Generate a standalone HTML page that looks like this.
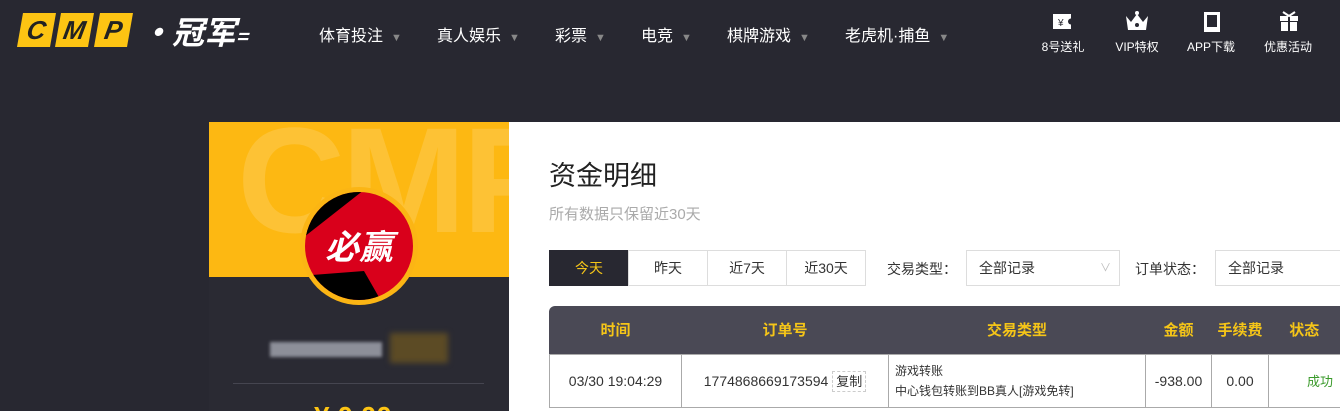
<!DOCTYPE html>
<html><head><meta charset="utf-8"><style>
*{margin:0;padding:0;box-sizing:border-box}
html,body{width:1340px;height:411px;overflow:hidden}
body{background:#282831;font-family:"Liberation Sans","Noto Sans CJK SC",sans-serif;position:relative}
.a{position:absolute}
.nav{color:#fff;font-size:16px;top:22px}
.nav i{font-style:normal;color:#888;font-size:11px;margin-left:8px}
.ic{color:#fff;font-size:12px;top:38px;text-align:center;width:70px}
.cmp{top:13px;width:33px;height:34px;background:#fdc413;color:#222;font:italic bold 26px "Liberation Sans",sans-serif;text-align:center;line-height:34px;transform:skewX(-10deg)}
.btn{top:250px;height:36px;border:1px solid #ddd;font-size:14px;color:#333;text-align:center;line-height:34px}
th{background:#4a4955;color:#f5c518;font-size:15px;height:48px;font-weight:bold}
td{border:1px solid #aaa;font-size:13px;color:#333;height:53px;text-align:center}
</style></head><body>
<div class="a cmp" style="left:20px">C</div><div class="a cmp" style="left:58px">M</div><div class="a cmp" style="left:97px">P</div>
<div class="a" style="left:140px;top:9px;color:#fff;font:italic bold 32px 'Noto Sans CJK SC',sans-serif;line-height:44px">·冠军<span style="font-size:20px">=</span></div>
<div class="a nav" style="left:319px">体育投注<i>▼</i></div>
<div class="a nav" style="left:437px">真人娱乐<i>▼</i></div>
<div class="a nav" style="left:555px">彩票<i>▼</i></div>
<div class="a nav" style="left:641px">电竞<i>▼</i></div>
<div class="a nav" style="left:727px">棋牌游戏<i>▼</i></div>
<div class="a nav" style="left:845px">老虎机·捕鱼<i>▼</i></div>
<svg class="a" style="left:1052px;top:12px" width="20" height="20"><rect x="1" y="2" width="18" height="15" fill="#fff"/><circle cx="19" cy="9.5" r="3" fill="#282831"/><text x="6" y="14" font-size="10" fill="#282831">¥</text></svg>
<svg class="a" style="left:1124px;top:10px" width="26" height="22"><path d="M2 6 L7 12 L13 4 L19 12 L24 6 L22 20 L4 20Z" fill="#fff"/><circle cx="13" cy="3" r="2" fill="#fff"/><circle cx="13" cy="15" r="2" fill="#282831"/></svg>
<svg class="a" style="left:1203px;top:11px" width="18" height="22"><rect x="1" y="1" width="16" height="20" fill="#fff"/><rect x="4" y="4" width="10" height="12" fill="#282831"/></svg>
<svg class="a" style="left:1278px;top:10px" width="22" height="22"><rect x="2" y="6" width="18" height="5" fill="#fff"/><rect x="3" y="12" width="16" height="9" fill="#fff"/><rect x="10" y="6" width="2" height="15" fill="#282831"/><path d="M5 2 L11 6 L17 2" stroke="#fff" stroke-width="2" fill="none"/></svg>
<div class="a ic" style="left:1028px">8号送礼</div>
<div class="a ic" style="left:1102px">VIP特权</div>
<div class="a ic" style="left:1176px">APP下载</div>
<div class="a ic" style="left:1253px">优惠活动</div>

<div class="a" style="left:209px;top:122px;width:300px;height:289px;background:#2a2a33"></div>
<svg class="a" style="left:209px;top:122px" width="300" height="155"><rect width="300" height="155" fill="#fdb812"/><text x="28" y="110" font-size="150" font-weight="bold" fill="#fdc235" letter-spacing="-4" font-family="Liberation Sans">CMP</text></svg>
<svg class="a" style="left:299px;top:186px" width="120" height="120"><defs><clipPath id="c"><circle cx="60" cy="60" r="54"/></clipPath></defs><circle cx="60" cy="60" r="59" fill="#fbb514"/><g clip-path="url(#c)"><rect width="120" height="120" fill="#d9001b"/><path d="M0 0 H70 L0 55Z" fill="#000"/><path d="M0 90 L65 85 L85 120 H0Z" fill="#000"/></g><text x="60" y="73" text-anchor="middle" font-size="34" font-weight="bold" font-style="italic" fill="#fff" font-family="Noto Sans CJK SC">必赢</text></svg>
<div class="a" style="left:270px;top:342px;width:112px;height:15px;background:#8d8f99;filter:blur(1.5px)"></div>
<div class="a" style="left:390px;top:333px;width:58px;height:30px;background:#5c4b25;filter:blur(3px)"></div>
<div class="a" style="left:233px;top:383px;width:251px;height:1px;background:#454550"></div>
<svg class="a" style="left:300px;top:401px" width="120" height="10"><text x="14" y="25" font-size="28" font-weight="bold" fill="#fdc413" font-family="Liberation Sans">¥ 0.00</text></svg>

<div class="a" style="left:509px;top:122px;width:831px;height:289px;background:#fff;overflow:hidden">
<div class="a" style="left:40px;top:32px;font-size:27px;color:#222">资金明细</div>
<div class="a" style="left:40px;top:81px;font-size:15px;color:#aaa">所有数据只保留近30天</div>
<div class="a btn" style="top:128px;left:40px;width:80px;background:#282831;color:#f5c518;border-color:#282831">今天</div>
<div class="a btn" style="top:128px;left:119px;width:80px">昨天</div>
<div class="a btn" style="top:128px;left:198px;width:80px">近7天</div>
<div class="a btn" style="top:128px;left:277px;width:80px">近30天</div>
<div class="a" style="left:378px;top:137px;font-size:14px;color:#333">交易类型：</div>
<div class="a btn" style="top:128px;left:457px;width:154px;text-align:left;padding-left:12px">全部记录<span style="position:absolute;right:8px;color:#bbb;font-size:11px">∨</span></div>
<div class="a" style="left:626px;top:137px;font-size:14px;color:#333">订单状态：</div>
<div class="a btn" style="top:128px;left:706px;width:125px;text-align:left;padding-left:12px;border-right:none">全部记录</div>
<div class="a" style="left:40px;top:184px;width:791px;height:48px;background:#4a4955;border-radius:6px 0 0 0"></div>
<table class="a" style="left:40px;top:184px;width:791px;border-collapse:collapse;table-layout:fixed">
<tr><th style="width:132px;background:none">时间</th><th style="width:207px">订单号</th><th style="width:257px">交易类型</th><th style="width:66px">金额</th><th style="width:57px">手续费</th><th>状态</th></tr>
<tr><td style="font-size:14px">03/30 19:04:29</td><td style="font-size:14px">1774868669173594 <span style="border:1px dashed #ccc;padding:2px 3px;font-size:13px">复制</span></td><td style="text-align:left;padding-left:6px;font-size:12px;line-height:20px">游戏转账<br>中心钱包转账到BB真人[游戏免转]</td><td style="font-size:14px">-938.00</td><td style="font-size:14px">0.00</td><td style="color:#3a9a2a;text-align:left;padding-left:38px;border-right:none">成功</td></tr>
</table>
</div>
</body></html>
